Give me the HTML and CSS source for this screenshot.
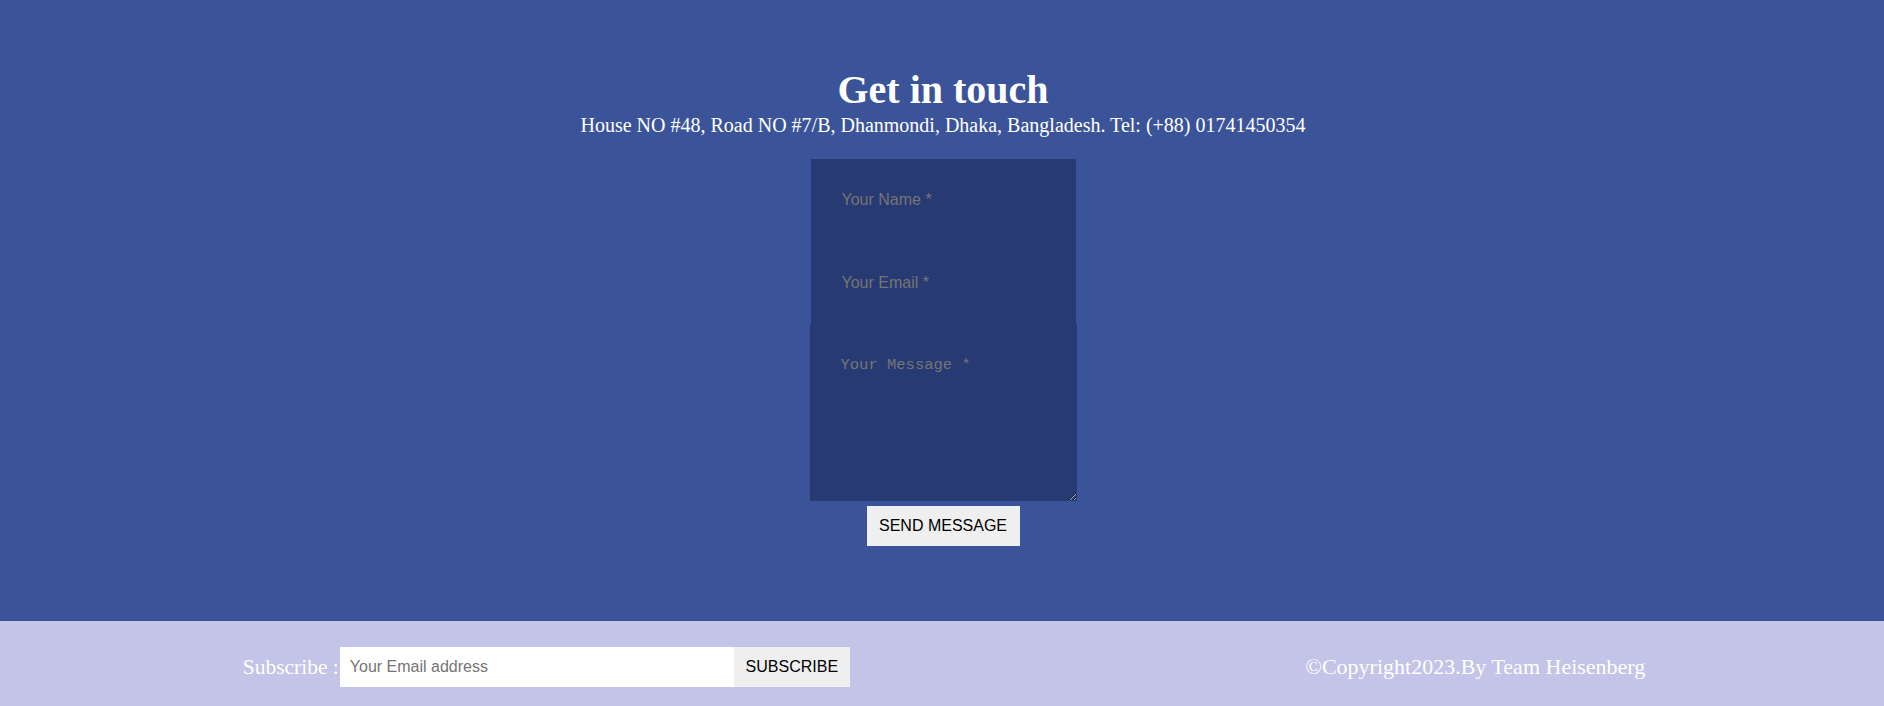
FILE: index.html
```html
<!DOCTYPE html>
<html lang="en">
<head>
<meta charset="utf-8">
<title>Get in touch</title>
<link rel="stylesheet" href="styles.css">
</head>
<body>
<section class="contact">
  <h1 class="contact-title">Get in touch</h1>
  <p class="contact-address">House NO #48, Road NO #7/B, Dhanmondi, Dhaka, Bangladesh. Tel: (+88) 01741450354</p>
  <form class="contact-form">
    <input class="field" type="text" placeholder="Your Name *">
    <input class="field" type="email" placeholder="Your Email *">
    <textarea class="message" placeholder="Your Message *"></textarea>
    <button class="send" type="button">SEND MESSAGE</button>
  </form>
</section>
<footer class="footer">
  <div class="subscribe">
    <span class="subscribe-label">Subscribe :</span>
    <input class="subscribe-input" type="email" placeholder="Your Email address">
    <button class="subscribe-btn" type="button">SUBSCRIBE</button>
  </div>
  <div class="copyright">&copy;Copyright2023.By Team Heisenberg</div>
</footer>
</body>
</html>
```

FILE: styles.css
```css
html, body {
  margin: 0;
  padding: 0;
}
body {
  font-family: "Liberation Serif", "Times New Roman", serif;
  background: #3b5499;
  overflow: hidden;
}
.contact {
  box-sizing: border-box;
  height: 621px;
  padding: 67px 0 0 2px;
  background: #3b5499;
  color: #ffffff;
  text-align: center;
}
.contact-title {
  margin: 0;
  font-size: 40px;
  font-weight: bold;
  line-height: 46px;
}
.contact-address {
  margin: 1px 0 0;
  font-size: 20px;
  line-height: 23px;
}
.contact-form {
  margin-top: 22px;
  display: flex;
  flex-direction: column;
  align-items: center;
}
.field {
  box-sizing: border-box;
  display: block;
  width: 265px;
  height: 82.5px;
  padding: 0 31px;
  margin: 0;
  border: none;
  outline: none;
  background: #283a73;
  color: #ffffff;
  font-family: "Liberation Sans", Arial, sans-serif;
  font-size: 16px;
}
.field::placeholder,
.message::placeholder {
  color: #757575;
}
.message {
  box-sizing: border-box;
  display: block;
  width: 267px;
  height: 177px;
  margin: 0;
  padding: 32px 30px 30px 31px;
  border: none;
  outline: none;
  background: #283a73;
  color: #ffffff;
  font-family: "Liberation Mono", "Courier New", monospace;
  font-size: 15.5px;
}
.send {
  margin-top: 5px;
  width: 153px;
  height: 40px;
  padding: 0;
  border: none;
  background: #efefef;
  color: #000000;
  font-family: "Liberation Sans", Arial, sans-serif;
  font-size: 16px;
}
.footer {
  box-sizing: border-box;
  height: 85px;
  padding: 26px 11px 19px 15px;
  background: #c4c3e8;
  color: #ffffff;
  display: flex;
  justify-content: space-around;
  align-items: center;
  font-size: 22px;
}
.subscribe {
  display: flex;
  align-items: center;
}
.subscribe-label {
  font-size: 21.5px;
  margin-right: 1px;
}
.subscribe-input {
  box-sizing: border-box;
  width: 394px;
  height: 40px;
  padding: 0 10px;
  margin: 0;
  border: none;
  outline: none;
  background: #ffffff;
  font-family: "Liberation Sans", Arial, sans-serif;
  font-size: 16px;
}
.subscribe-input::placeholder {
  color: #757575;
}
.subscribe-btn {
  width: 116px;
  height: 40px;
  padding: 0;
  margin: 0;
  border: none;
  background: #efefef;
  color: #000000;
  font-family: "Liberation Sans", Arial, sans-serif;
  font-size: 16px;
}
.copyright {
  font-size: 22px;
}
```
